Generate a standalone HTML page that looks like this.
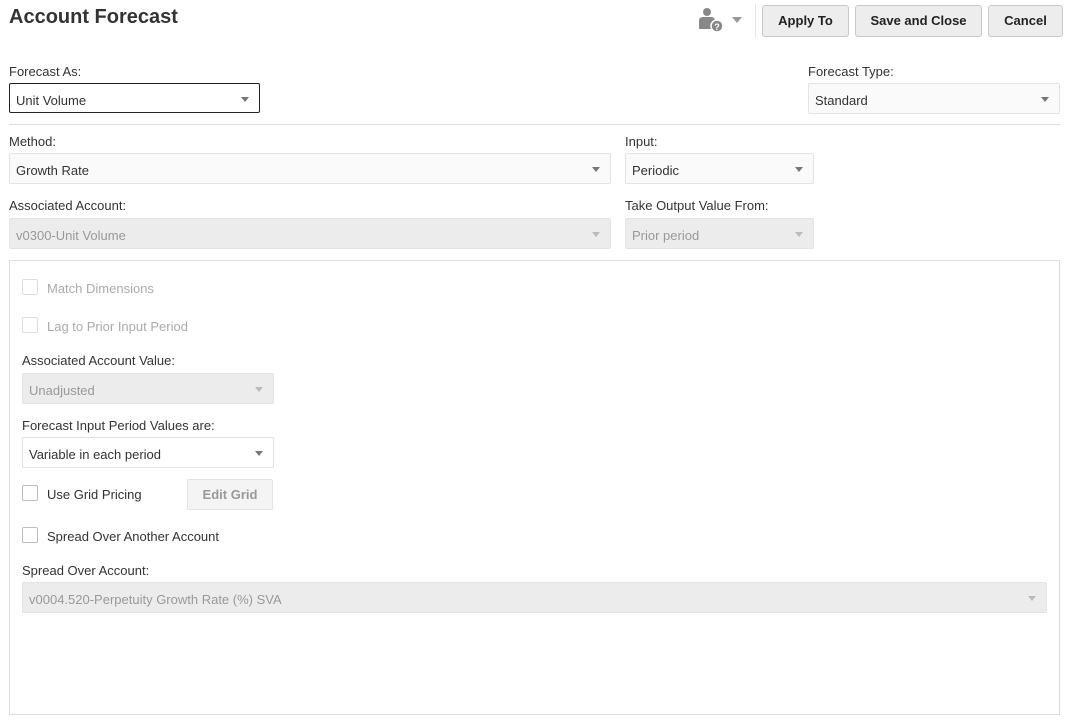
<!DOCTYPE html>
<html><head><meta charset="utf-8"><style>
*{box-sizing:border-box;margin:0;padding:0}
body{width:1069px;height:723px;background:#fff;font-family:"Liberation Sans",sans-serif;color:#333;font-size:13px;position:relative;overflow:hidden}
.a{position:absolute}
.lbl{position:absolute;font-size:13px;color:#333;margin-top:1px}
.sel{position:absolute;height:31px;border:1px solid #e3e3e3;border-radius:2px;background:#fafafa;font-size:13px;color:#333;padding:9px 0 0 6px}
.sel.dis{background:#ececec;border-color:#e3e3e3;color:#999}
.sel:after{content:"";position:absolute;right:10px;top:13px;border-left:4.5px solid transparent;border-right:4.5px solid transparent;border-top:5px solid #777}
.sel.dis:after{border-top-color:#bbb}
.btn{position:absolute;top:5px;height:32px;border:1px solid #c9c9c9;border-radius:3px;background:#ededed;font-size:13px;font-weight:bold;color:#222;text-align:center;line-height:30px}
.cb{position:absolute;width:16px;height:16px;border:1px solid #bdbdbd;border-radius:2px;background:#fff}
.cbl{position:absolute;font-size:13px;margin-top:1px}
</style></head><body>
<div class="a" style="left:9px;top:6px;font-size:20px;font-weight:bold;color:#333">Account Forecast</div>
<svg class="a" style="left:698px;top:7px" width="28" height="26" viewBox="0 0 28 26">
<circle cx="9" cy="5" r="4" fill="#888"/><path d="M1 22 V14 Q1 10 5 10 H13 Q17 10 17 14 V22 Z" fill="#888"/>
<circle cx="19" cy="19" r="6" fill="#888" stroke="#fff" stroke-width="1.5"/>
<text x="19" y="23" font-size="9" font-weight="bold" fill="#fff" text-anchor="middle" font-family="Liberation Sans">?</text></svg>
<div class="a" style="left:732px;top:17px;border-left:5px solid transparent;border-right:5px solid transparent;border-top:6px solid #999"></div>
<div class="a" style="left:755px;top:4px;width:1px;height:34px;background:#e6e6e6"></div>
<div class="btn" style="left:762px;width:87px">Apply To</div>
<div class="btn" style="left:855px;width:127px">Save and Close</div>
<div class="btn" style="left:988px;width:75px">Cancel</div>

<div class="lbl" style="left:9px;top:63px">Forecast As:</div>
<div class="sel" style="left:9px;top:83px;width:251px;height:30px;border:1px solid #222;background:#fff">Unit Volume</div>
<div class="lbl" style="left:808px;top:63px">Forecast Type:</div>
<div class="sel" style="left:808px;top:83px;width:252px">Standard</div>
<div class="a" style="left:9px;top:124px;width:1051px;height:1px;background:#ddd"></div>

<div class="lbl" style="left:9px;top:133px">Method:</div>
<div class="sel" style="left:9px;top:153px;width:602px">Growth Rate</div>
<div class="lbl" style="left:625px;top:133px">Input:</div>
<div class="sel" style="left:625px;top:153px;width:189px">Periodic</div>
<div class="lbl" style="left:9px;top:197px">Associated Account:</div>
<div class="sel dis" style="left:9px;top:218px;width:602px">v0300-Unit Volume</div>
<div class="lbl" style="left:625px;top:197px">Take Output Value From:</div>
<div class="sel dis" style="left:625px;top:218px;width:189px">Prior period</div>

<div class="a" style="left:9px;top:260px;width:1051px;height:455px;border:1px solid #ddd"></div>
<div class="cb" style="left:22px;top:279px;border-color:#ddd"></div><div class="cbl" style="left:47px;top:280px;color:#aaa">Match Dimensions</div>
<div class="cb" style="left:22px;top:317px;border-color:#ddd"></div><div class="cbl" style="left:47px;top:318px;color:#aaa">Lag to Prior Input Period</div>
<div class="lbl" style="left:22px;top:352px">Associated Account Value:</div>
<div class="sel dis" style="left:22px;top:373px;width:252px">Unadjusted</div>
<div class="lbl" style="left:22px;top:417px">Forecast Input Period Values are:</div>
<div class="sel" style="left:22px;top:437px;width:252px;background:#fff">Variable in each period</div>
<div class="cb" style="left:22px;top:485px"></div><div class="cbl" style="left:47px;top:486px">Use Grid Pricing</div>
<div class="a" style="left:187px;top:479px;width:86px;height:31px;border:1px solid #e3e3e3;border-radius:2px;background:#f4f4f4;color:#999;font-weight:bold;font-size:13px;text-align:center;line-height:30px">Edit Grid</div>
<div class="cb" style="left:22px;top:527px"></div><div class="cbl" style="left:47px;top:528px">Spread Over Another Account</div>
<div class="lbl" style="left:22px;top:562px">Spread Over Account:</div>
<div class="sel dis" style="left:22px;top:582px;width:1025px">v0004.520-Perpetuity Growth Rate (%) SVA</div>
</body></html>
